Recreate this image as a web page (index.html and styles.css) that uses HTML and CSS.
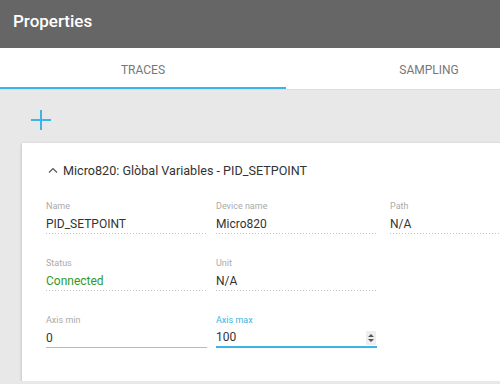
FILE: index.html
```html
<!DOCTYPE html>
<html lang="en">

<head>
    <meta charset="UTF-8">
    <title>Properties</title>
    <link rel="stylesheet" href="styles.css">
</head>

<body>
    <!-- App bar -->
    <header class="appbar">Properties</header>

    <!-- Tabs -->
    <nav class="tabs">
        <div class="tab active">TRACES</div>
        <div class="tab">SAMPLING</div>
    </nav>

    <main class="content">
        <button class="add-btn" aria-label="Add trace">
            <svg viewBox="0 0 20 20" width="20" height="20">
                <path d="M10 0v20M0 10h20" stroke="#3bb4e6" stroke-width="2" fill="none" />
            </svg>
        </button>

        <section class="card">
            <div class="card-head">
                <svg class="chevron" viewBox="0 0 10 6" width="10" height="6">
                    <path d="M1 5.5L5 1.5l4 4" stroke="#555" stroke-width="1.2" fill="none" />
                </svg>
                <span>Micro820: Glòbal Variables - PID_SETPOINT</span>
            </div>

            <div class="fields">
                <div class="field">
                    <div class="label">Name</div>
                    <div class="value">PID_SETPOINT</div>
                </div>
                <div class="field">
                    <div class="label">Device name</div>
                    <div class="value">Micro820</div>
                </div>
                <div class="field">
                    <div class="label">Path</div>
                    <div class="value">N/A</div>
                </div>

                <div class="field">
                    <div class="label">Status</div>
                    <div class="value ok">Connected</div>
                </div>
                <div class="field">
                    <div class="label">Unit</div>
                    <div class="value">N/A</div>
                </div>
                <div class="field"></div>

                <div class="field">
                    <div class="label">Axis min</div>
                    <div class="value input">0</div>
                </div>
                <div class="field focused">
                    <div class="label">Axis max</div>
                    <div class="value input">
                        100
                        <span class="spinner">
                            <svg viewBox="0 0 10 14" width="10" height="14">
                                <path d="M2 6l3-3 3 3zM2 8l3 3 3-3z" fill="#555" />
                            </svg>
                        </span>
                    </div>
                </div>
            </div>
        </section>
    </main>
</body>

</html>
```

FILE: styles.css
```css
body {
    margin: 0;
    font-family: Roboto, "Liberation Sans", sans-serif;
    background-color: #e8e8e8;
    height: 384px;
    overflow: hidden;
}

.appbar {
    height: 48px;
    background-color: #666;
    color: #fff;
    font-size: 17px;
    font-weight: 500;
    display: flex;
    align-items: center;
    padding-left: 13px;
    padding-bottom: 6px;
    box-sizing: border-box;
}

.tabs {
    display: flex;
    height: 42px;
    background-color: #fff;
    overflow: hidden;
    border-bottom: 1px solid #ddd;
    box-sizing: border-box;
}

.tab {
    flex: 0 0 286px;
    text-align: center;
    font-size: 12px;
    color: #777;
    line-height: 44px;
    height: 41px;
    box-sizing: border-box;
}

.tab.active {
    border-bottom: 2px solid #3bb4e6;
}

.content {
    padding: 20px 0 0 22px;
    overflow: hidden;
}

.add-btn {
    display: block;
    margin-left: 9px;
    padding: 0;
    border: 0;
    background: none;
    width: 20px;
    height: 20px;
}

.add-btn svg {
    display: block;
}

.card {
    margin-top: 13px;
    margin-right: -30px;
    height: 238px;
    background-color: #fff;
    box-shadow: 0 1px 3px rgba(0, 0, 0, 0.25);
}

.card-head {
    display: flex;
    align-items: center;
    gap: 5px;
    padding: 19px 0 0 26px;
    height: 16px;
    font-size: 12.6px;
    color: #333;
}

.fields {
    display: grid;
    grid-template-columns: 170px 174px 1fr;
    row-gap: 23px;
    margin: 22px 0 0 24px;
}

.field {
    width: 161px;
}

.label {
    font-size: 9px;
    line-height: 12px;
    color: #aaa;
}

.value {
    margin-top: 3px;
    height: 18px;
    line-height: 19px;
    font-size: 12px;
    color: #333;
    padding-bottom: 1px;
    background-image: repeating-linear-gradient(to right, #c4c4c4 0 1px, transparent 1px 3px);
    background-size: 100% 1px;
    background-repeat: no-repeat;
    background-position: bottom left;
}

.value.ok {
    color: #2d9a2d;
}

.value.input {
    background: none;
    border-bottom: 1px solid #bbb;
    padding-bottom: 0;
    display: flex;
    align-items: center;
    justify-content: space-between;
}

.focused .label {
    color: #3bb4e6;
}

.focused .value.input {
    border-bottom: 2px solid #3bb4e6;
    height: 17px;
}

.spinner {
    display: flex;
    width: 10px;
    height: 14px;
    margin-right: 1px;
    background-color: #eee;
}
```
